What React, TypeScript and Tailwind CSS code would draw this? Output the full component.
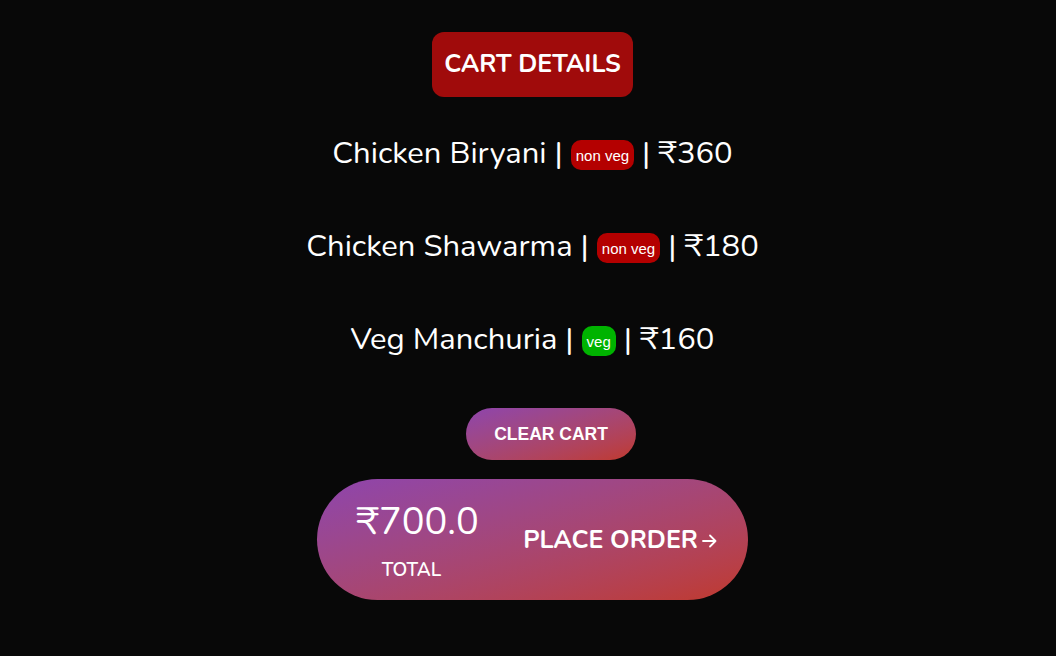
const items = [
  { name: 'Chicken Biryani', veg: false, price: 360 },
  { name: 'Chicken Shawarma', veg: false, price: 180 },
  { name: 'Veg Manchuria', veg: true, price: 160 },
]

const nunito = { fontFamily: '"Nunito", "Open Sans", "Noto Sans", sans-serif' }
const arial = { fontFamily: '"Liberation Sans", Arial, sans-serif' }

export default function App() {
  const total = items.reduce((s, i) => s + i.price, 0)
  return (
    <div className="min-h-[656px] bg-[#080808] flex flex-col items-center pt-8 pl-[9px] text-white" style={nunito}>
      <div className="h-[65px] px-3 flex items-center rounded-xl bg-[#a00b0b] text-[25px] font-bold">
        CART DETAILS
      </div>

      <div className="mt-[36px] flex flex-col items-center gap-[53px]">
        {items.map((item) => (
          <div key={item.name} className="h-[40px] flex items-center text-[31px] leading-none">
            <span>{item.name} |&nbsp;</span>
            <span
              className={`${item.veg ? 'bg-[#00b300]' : 'bg-[#b40000]'} h-[30px] px-[5px] rounded-[10px] flex items-center text-[15px] mt-[4px]`}
              style={arial}
            >
              {item.veg ? 'veg' : 'non veg'}
            </span>
            <span>&nbsp;| ₹{item.price}</span>
          </div>
        ))}
      </div>

      <button
        className="mt-[49px] ml-[37px] w-[170px] h-[52px] rounded-full bg-linear-to-br from-[#8e44ad] to-[#c0392b] text-[17.5px] font-bold text-white"
        style={arial}
      >
        CLEAR CART
      </button>

      <div className="mt-[19px] w-[431px] h-[121px] rounded-full bg-linear-to-br from-[#8e44ad] to-[#c0392b] flex items-center pl-[40px] pr-[31px]">
        <div className="flex flex-col items-center w-[121px]">
          <span className="text-[38px] leading-none mt-[4px]">₹{total.toFixed(1)}</span>
          <span className="text-[19px] font-semibold mt-[20px] mr-[12px] leading-none">TOTAL</span>
        </div>
        <div className="ml-auto flex items-center text-[25px] font-bold mt-[2px]">
          PLACE ORDER
          <svg width="15" height="14" viewBox="0 0 15 14" fill="none" stroke="white" strokeWidth="1.8" strokeLinecap="round" strokeLinejoin="round" className="ml-[4px]">
            <path d="M1 7h12.5M8 1.5L13.5 7 8 12.5" />
          </svg>
        </div>
      </div>
    </div>
  )
}
